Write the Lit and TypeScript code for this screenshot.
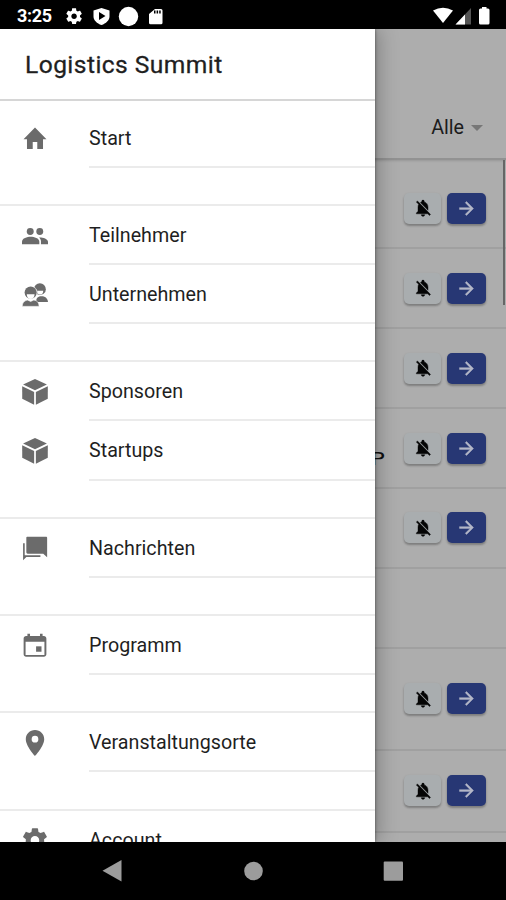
import { LitElement, html, css, svg } from "lit";
import { customElement } from "lit/decorators.js";
import { styleMap } from "lit/directives/style-map.js";

const GEAR =
  "M19.43 12.98c.04-.32.07-.64.07-.98s-.03-.66-.07-.98l2.11-1.65c.19-.15.24-.42.12-.64l-2-3.46c-.12-.22-.39-.3-.61-.22l-2.49 1c-.52-.4-1.08-.73-1.69-.98l-.38-2.65C14.46 2.18 14.25 2 14 2h-4c-.25 0-.46.18-.49.42l-.38 2.65c-.61.25-1.17.59-1.69.98l-2.49-1c-.23-.09-.49 0-.61.22l-2 3.46c-.13.22-.07.49.12.64l2.11 1.65c-.04.32-.07.65-.07.98s.03.66.07.98l-2.11 1.65c-.19.15-.24.42-.12.64l2 3.46c.12.22.39.3.61.22l2.49-1c.52.4 1.08.73 1.69.98l.38 2.65c.03.24.24.42.49.42h4c.25 0 .46-.18.49-.42l.38-2.65c.61-.25 1.17-.59 1.69-.98l2.49 1c.23.09.49 0 .61-.22l2-3.46c.12-.22.07-.49-.12-.64l-2.11-1.65zM12 15.5c-1.93 0-3.5-1.57-3.5-3.5s1.57-3.5 3.5-3.5 3.5 1.57 3.5 3.5-1.57 3.5-3.5 3.5z";

const ICONS: Record<string, unknown> = {
  home: svg`<path d="M9.900 22.200v-6.600h4.200v6.600h5.300v-9h3.200L12 2.200 1.400 13.200h3.200v9z"/>`,
  people: svg`<circle cx="7.6" cy="7.8" r="3.2"/><circle cx="16.4" cy="7.8" r="3.2"/><path d="M0 19.5v-2.2C0 14.2 4.8 12.8 8 12.8s8 1.4 8 4.5v2.2z"/><path d="M17.5 19.5v-2.6c0-1.6-.7-2.7-1.8-3.6 3.1-.2 8.3 1 8.3 4v2.2z"/>`,
  company: svg`<circle cx="16.5" cy="6.600" r="5.500"/><path d="M14 8h5.600c0 2.300-1.300 3.600-2.900 3.600S14 10.300 14 8z" fill="#fff"/><path d="M13 18.500c0-4 2-5.300 5-5.300s5.700 1.600 6 5.300z"/><circle cx="8" cy="10" r="6.400" fill="#fff"/><circle cx="8" cy="9.800" r="5.600"/><path d="M4.400 11.200h7.200c0 2.800-1.600 4.500-3.600 4.500s-3.600-1.700-3.600-4.500z" fill="#fff"/><path d="M.2 22.500c.2-4 2.600-5.500 5-5.800l2.800 1.200 2.800-1.200c2.800.3 4.800 1.800 5 5.800z" stroke="#fff" stroke-width=".6"/>`,
  cube: svg`<path d="M12 0 23 5 12 10.300 1 5z"/><path d="M.2 6.700 11.200 12v11.800L.2 18.300z"/><path d="M23.800 6.700 12.800 12v11.800l11-5.500z"/>`,
  chat: svg`<path d="M4.800 1.500h17.400c.6 0 1 .4 1 1v18l-3.600-3.300H5.200c-.7 0-1.200-.5-1.200-1.200V2.300q0-.8.800-.8z"/><path d="M1 7.500H2.500v11.200h14.500v1.500H4L1 23.300z"/>`,
  event: svg`<path fill-rule="evenodd" d="M5 .8h2.400v2h9.200v-2H19v2h1.200c1.300 0 2.300 1 2.300 2.300v14.600c0 1.300-1 2.300-2.300 2.300H3.800c-1.300 0-2.300-1-2.300-2.300V5.100c0-1.300 1-2.300 2.300-2.300H5zM3.300 8v12.300h17.400V8z"/><path d="M13 12.300h5v5h-5z"/>`,
  place: svg`<path fill-rule="evenodd" d="M12 0C7.200 0 3.500 3.700 3.500 8.500 3.500 14.800 12 24 12 24s8.500-9.200 8.500-15.500C20.500 3.700 16.800 0 12 0zm0 5.400a3.100 3.100 0 1 1 0 6.200 3.100 3.100 0 0 1 0-6.200z"/>`,
  gear: svg`<path d="${GEAR}" transform="translate(-1.6 -1.2) scale(1.13)"/>`,
  bellOff: svg`<path stroke="currentColor" stroke-width=".5" d="M20 18.690 7.840 6.140 5.270 3.490 4 4.760l2.800 2.800v.010c-.52.990-.8 2.160-.8 3.420v5l-2 2v1h13.730l2 2L21 19.720zM12 22c1.110 0 2-.89 2-2h-4c0 1.110.89 2 2 2zm6-7.320V11c0-3.080-1.640-5.640-4.500-6.320V4c0-.83-.67-1.500-1.500-1.500s-1.500.67-1.500 1.500v.68c-.15.030-.29.080-.42.120-.4.130-.76.300-1.100.500z"/>`,
  arrow: svg`<path stroke="currentColor" stroke-width=".5" d="m12 4-1.410 1.410L16.170 11H4v2h12.170l-5.580 5.590L12 20l8-8z"/>`,
};

const icon = (name: string, cls: string) =>
  html`<svg class=${cls} viewBox="0 0 24 24" fill="currentColor">${ICONS[name]}</svg>`;

interface Entry {
  icon: string;
  label: string;
}

const GROUPS: Entry[][] = [
  [{ icon: "home", label: "Start" }],
  [
    { icon: "people", label: "Teilnehmer" },
    { icon: "company", label: "Unternehmen" },
  ],
  [
    { icon: "cube", label: "Sponsoren" },
    { icon: "cube", label: "Startups" },
  ],
  [{ icon: "chat", label: "Nachrichten" }],
  [{ icon: "event", label: "Programm" }],
  [{ icon: "place", label: "Veranstaltungsorte" }],
  [{ icon: "gear", label: "Account" }],
];

@customElement("status-bar")
class StatusBar extends LitElement {
  static styles = css`
    :host {
      display: flex;
      align-items: center;
      height: 29px;
      padding: 2px 15px 0 17px;
      box-sizing: border-box;
      background: #000;
      color: #fff;
      font: 700 18px/27px Roboto, sans-serif;
    }
    .left { flex: 1; display: flex; align-items: center; }
    .time { width: 48px; letter-spacing: -0.3px; }
    svg { display: block; }
  `;
  render() {
    return html`
      <div class="left">
        <span class="time">3:25</span>
        <svg width="108" height="22" viewBox="65 4 108 22" fill="#fff">
          <path d="${GEAR}" transform="translate(64.600 5.700) scale(.79)" />
          <path fill-rule="evenodd" d="M101.500 7l8 2.500v6c0 4-3.500 6.800-8 8.600-4.500-1.800-8-4.600-8-8.600v-6zM99 11v8l6.500-4z" />
          <circle cx="128.500" cy="15.500" r="9.700" />
          <path fill-rule="evenodd" d="M155 8h6q1.500 0 1.500 1.500v12.300q0 1.500-1.500 1.500h-10.500q-1.500 0-1.500-1.500V13zM154 9.500v3h1.500v-3zm2.600 0v3h1.500v-3zm2.600 0v3h1.500v-3z" />
        </svg>
      </div>
      <svg width="58" height="22" viewBox="433 4 58 22" fill="#fff">
        <path d="M433 9.500q10-5.500 20 0L443 22z" />
        <path d="M471 7v16.500h-15.500z" fill="#555" />
        <path d="M465 13.400v10.100h-9.500z" />
        <path d="M482 7.500V6h4.500v1.500h1.500q1.500 0 1.500 1.500v13q0 1.500-1.500 1.500h-7.500q-1.500 0-1.500-1.500V9q0-1.500 1.500-1.500z" />
      </svg>
    `;
  }
}

@customElement("agenda-list")
class AgendaList extends LitElement {
  static styles = css`
    :host {
      display: flex;
      flex-direction: column;
      height: 100%;
      background: #adadad;
      font-family: Roboto, sans-serif;
      color: #1c1c1c;
    }
    .bar {
      flex: none;
      height: 131px;
      box-sizing: border-box;
      padding: 87px 23px 0 0;
      display: flex;
      justify-content: flex-end;
      gap: 7px;
      font-size: 19.700px;
      line-height: 24px;
      border-bottom: 2px solid #929292;
      box-shadow: 0 1px 2px rgba(0, 0, 0, 0.12);
    }
    .caret {
      margin-top: 9px;
      width: 0;
      height: 0;
      border: 6px solid transparent;
      border-top-color: #777;
      border-bottom: 0;
    }
    .list { position: relative; flex: 1; overflow: hidden; }
    .thumb { position: absolute; top: 0; right: 1px; width: 2px; height: 145px; background: #666; }
    .row {
      box-sizing: border-box;
      border-bottom: 2px solid #a0a0a0;
      display: flex;
      align-items: center;
      justify-content: flex-end;
      gap: 6px;
      padding: 0 20px 0 0;
    }
    .row.first { padding-top: 9px; }
    .name {
      margin-right: 13px;
      padding-top: 22px;
      font: 18px/20px "DejaVu Sans", sans-serif;
      color: #111;
      transform: scaleX(1.35);
      transform-origin: right;
    }
    .btn {
      display: flex;
      align-items: center;
      justify-content: center;
      width: 37px;
      height: 31px;
      border-radius: 5px;
      background: #a9adaf;
      color: #050505;
      box-shadow: 0 2px 2px rgba(0, 0, 0, 0.22), 0 1px 3px rgba(0, 0, 0, 0.1);
    }
    .go { width: 39px; background: #273774; color: #b4b7c8; }
    .glyph { width: 20px; height: 20px; }
    .go .glyph { width: 21px; height: 21px; }
  `;
  private rows = [
    { height: 89, name: "" },
    { height: 80, name: "" },
    { height: 80, name: "" },
    { height: 80, name: "P" },
    { height: 79.5, name: "" },
    { height: 80, name: "", empty: true },
    { height: 102.5, name: "" },
    { height: 81.5, name: "" },
  ];
  render() {
    return html`
      <div class="bar"><span>Alle</span><span class="caret"></span></div>
      <div class="list">
        ${this.rows.map(
          (r, i) => html`<div class="row ${i === 0 ? "first" : ""}" style=${styleMap({ height: `${r.height}px` })}>
            ${r.empty
              ? ""
              : html`${r.name ? html`<span class="name">${r.name}</span>` : ""}
                  <span class="btn">${icon("bellOff", "glyph")}</span>
                  <span class="btn go">${icon("arrow", "glyph")}</span>`}
          </div>`
        )}
        <div class="thumb"></div>
      </div>
    `;
  }
}

@customElement("nav-drawer")
class NavDrawer extends LitElement {
  static styles = css`
    :host {
      display: block;
      background: #fff;
      overflow: hidden;
      font-family: Roboto, sans-serif;
      color: #1f1f1f;
    }
    .title {
      height: 72px;
      box-sizing: border-box;
      padding-left: 25px;
      font-size: 24.600px;
      font-weight: 400;
      line-height: 72px;
      letter-spacing: 0.430px;
      border-bottom: 2px solid #d6d6d6;
      margin: 0 0 7.700px;
      -webkit-text-stroke: 0.300px #1f1f1f;
    }
    .group { border-bottom: 2px solid #ebebeb; padding-bottom: 36.200px; }
    .item { display: flex; height: 59.100px; }
    .icon { flex: none; width: 26px; height: 26px; margin: 16.600px 41px 0 22px; color: #6b6b6b; }
    .label {
      flex: 1;
      box-sizing: border-box;
      border-bottom: 2px solid #ebebeb;
      font-size: 19.700px;
      line-height: 60.600px;
    }
  `;
  render() {
    return html`
      <h1 class="title">Logistics Summit</h1>
      ${GROUPS.map(
        (g) => html`<div class="group">
          ${g.map(
            (e) => html`<div class="item">
              ${icon(e.icon, "icon")}
              <span class="label">${e.label}</span>
            </div>`
          )}
        </div>`
      )}
    `;
  }
}

@customElement("app-root")
class AppRoot extends LitElement {
  static styles = css`
    :host { display: flex; flex-direction: column; width: 506px; height: 900px; overflow: hidden; background: #000; }
    .stage { position: relative; height: 813px; overflow: hidden; }
    .drawer { position: absolute; inset: 0 auto 0 0; width: 375px; box-shadow: 0 0 3px rgba(0, 0, 0, 0.5), 4px 0 18px rgba(0, 0, 0, 0.250); }
    .nav { flex: 1; display: flex; justify-content: center; align-items: center; }
    .nav svg { display: block; }
  `;
  render() {
    return html`
      <status-bar></status-bar>
      <div class="stage">
        <agenda-list></agenda-list>
        <nav-drawer class="drawer"></nav-drawer>
      </div>
      <div class="nav">
        <svg width="506" height="58" viewBox="0 842 506 58" fill="#9c9c9c">
          <path d="M121.500 860v21.500L102.500 870.800z" />
          <circle cx="253.500" cy="871" r="9.300" />
          <rect x="383.700" y="861.500" width="19.300" height="19.300" rx="1" />
        </svg>
      </div>
    `;
  }
}
